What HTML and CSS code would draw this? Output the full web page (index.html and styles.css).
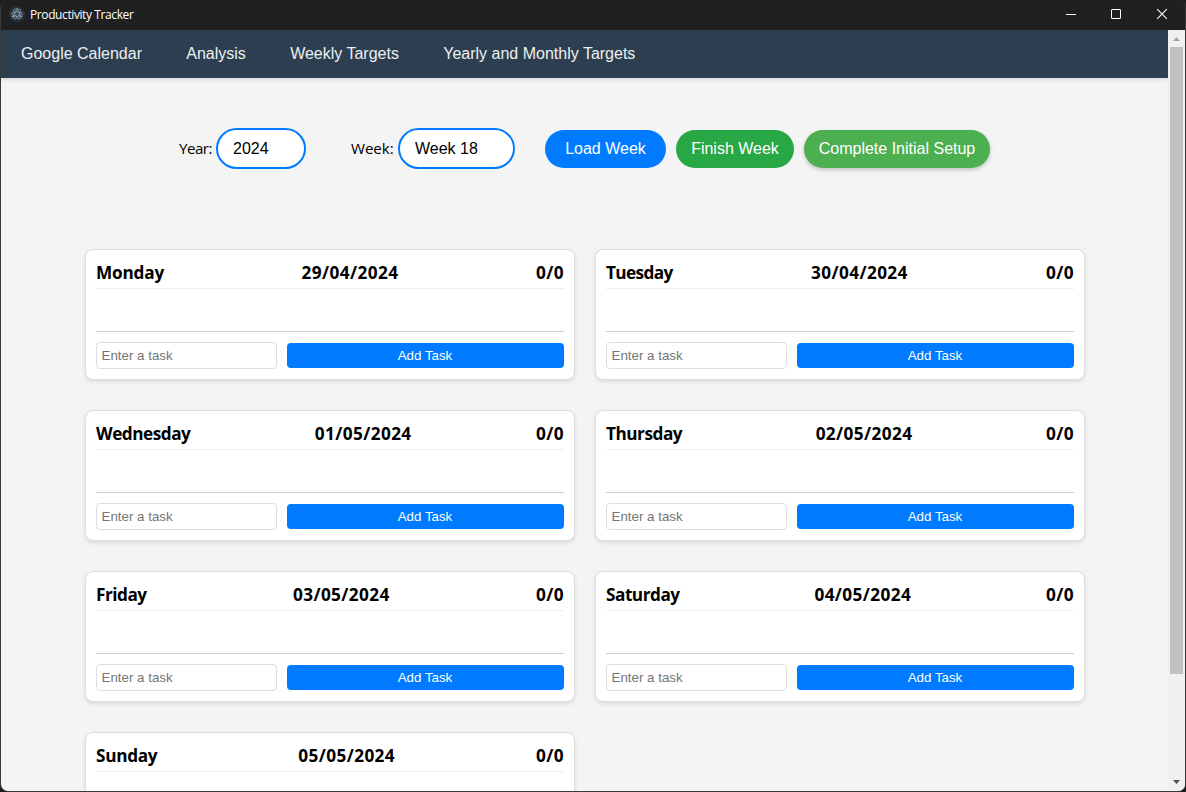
FILE: index.html
```html
<!DOCTYPE html>
<html lang="en">
<head>
<meta charset="utf-8">
<title>Productivity Tracker</title>
<link rel="stylesheet" href="styles.css">
</head>
<body>
<div class="window">
  <header class="titlebar">
    <svg class="app-icon" width="16" height="16" viewBox="0 0 16 16" fill="none" stroke="#8fb3bf" stroke-width="0.75">
      <circle cx="8" cy="8" r="8" fill="#2b2e3b" stroke="none"/>
      <ellipse cx="8" cy="8" rx="5.4" ry="2.2"/>
      <ellipse cx="8" cy="8" rx="5.4" ry="2.2" transform="rotate(60 8 8)"/>
      <ellipse cx="8" cy="8" rx="5.4" ry="2.2" transform="rotate(120 8 8)"/>
      <g fill="#8fb3bf" stroke="none"><circle cx="8" cy="8" r=".6"/><circle cx="3.6" cy="10.6" r=".8"/><circle cx="12.4" cy="10.6" r=".8"/><circle cx="8" cy="2.8" r=".8"/></g>
    </svg>
    <span class="app-title">Productivity Tracker</span>
    <div class="controls">
      <svg width="46" height="30" viewBox="0 0 46 30"><path d="M18 14.5h10" stroke="#fff"/></svg>
      <svg width="46" height="30" viewBox="0 0 46 30"><rect x="17.5" y="9.5" width="9" height="9" rx=".5" fill="none" stroke="#fff"/></svg>
      <svg width="46" height="30" viewBox="0 0 46 30"><path d="M17.2 9.2l9.6 9.6M26.8 9.2l-9.6 9.6" stroke="#fff" stroke-width="1.1"/></svg>
    </div>
  </header>
  <div class="viewport">
    <div class="page">
      <nav class="navbar">
        <a>Google Calendar</a><a>Analysis</a><a>Weekly Targets</a><a>Yearly and Monthly Targets</a>
      </nav>
      <div class="toolbar">
        <label class="year-label">Year:</label><div class="select year">2024</div>
        <label class="week-label">Week:</label><div class="select week">Week 18</div>
        <button class="pill load">Load Week</button>
        <button class="pill finish">Finish Week</button>
        <button class="pill setup">Complete Initial Setup</button>
      </div>
      <main class="days">
        <section class="day"><h3><span class="name mon">Monday</span><span class="date">29/04/2024</span><span class="score">0/0</span></h3><div class="tasks"></div><div class="entry"><input placeholder="Enter a task"><button>Add Task</button></div></section>
        <section class="day"><h3><span class="name tue">Tuesday</span><span class="date">30/04/2024</span><span class="score">0/0</span></h3><div class="tasks"></div><div class="entry"><input placeholder="Enter a task"><button>Add Task</button></div></section>
        <section class="day"><h3><span class="name">Wednesday</span><span class="date">01/05/2024</span><span class="score">0/0</span></h3><div class="tasks"></div><div class="entry"><input placeholder="Enter a task"><button>Add Task</button></div></section>
        <section class="day"><h3><span class="name">Thursday</span><span class="date">02/05/2024</span><span class="score">0/0</span></h3><div class="tasks"></div><div class="entry"><input placeholder="Enter a task"><button>Add Task</button></div></section>
        <section class="day"><h3><span class="name">Friday</span><span class="date">03/05/2024</span><span class="score">0/0</span></h3><div class="tasks"></div><div class="entry"><input placeholder="Enter a task"><button>Add Task</button></div></section>
        <section class="day"><h3><span class="name">Saturday</span><span class="date">04/05/2024</span><span class="score">0/0</span></h3><div class="tasks"></div><div class="entry"><input placeholder="Enter a task"><button>Add Task</button></div></section>
        <section class="day"><h3><span class="name sun">Sunday</span><span class="date">05/05/2024</span><span class="score">0/0</span></h3><div class="tasks"></div></section>
      </main>
    </div>
    <div class="scrollbar">
      <svg width="17" height="17" viewBox="0 0 17 17"><path d="M5 11l3.5-4 3.5 4z" fill="#a3a3a3"/></svg>
      <div class="thumb"></div>
      <svg width="17" height="17" viewBox="0 0 17 17"><path d="M5 6h7l-3.5 4z" fill="#505050"/></svg>
    </div>
  </div>
</div>
</body>
</html>
```
FILE: styles.css
```css
* { box-sizing: border-box; }
body { margin: 0; background: #1b1b1b; overflow: hidden; }
.window {
  width: 1186px; height: 792px;
  border: solid #38393b; border-width: 0 1px 1px;
  border-radius: 8px; overflow: hidden;
  display: flex; flex-direction: column;
  background: #202020;
}
.titlebar { height: 30px; flex: none; display: flex; align-items: center; padding-left: 8px; background: #202020; color: #fff; }
.app-icon { margin-top: -2px; }
.app-title { margin-left: 5px; font: 12px/16px "Open Sans", "Noto Sans", sans-serif; letter-spacing: -0.4px; white-space: nowrap; }
.controls { margin: 0 -1px 0 auto; display: flex; }
.viewport { flex: 1; min-height: 0; display: flex; background: #f4f4f4; }
.page { width: 1167px; flex: none; overflow: hidden; }
.navbar {
  height: 48px; padding-left: 20px; display: flex; align-items: center; gap: 44.3px;
  background: #2c3e50; box-shadow: 0 2px 4px rgba(0,0,0,.1);
  color: #ecf0f1; font: 16px/18px "Liberation Sans", Arial, sans-serif;
}
.navbar a { white-space: nowrap; margin-top: -1px; }
.toolbar { display: flex; align-items: center; height: 41px; margin: 50px 0 80px 178px; }
.toolbar label { font: 15.2px/20px "Open Sans", "Noto Sans", sans-serif; white-space: nowrap; flex: none; margin-top: -1px; }
.toolbar .year-label { width: 37px; letter-spacing: -0.55px; }
.toolbar .week-label { width: 47px; margin-left: 45px; letter-spacing: -0.1px; }
.select {
  height: 41px; border: 2px solid #007bff; border-radius: 21px; background: #fff;
  padding: 0 15px; font: 16px/37px "Liberation Sans", Arial, sans-serif; white-space: nowrap;
}
.year { width: 90px; }
.week { width: 117px; }
.pill {
  height: 38px; border: 0; border-radius: 19px; color: #fff; padding: 0; margin: 1px 10px 0 0;
  font: 16px/38px "Liberation Sans", Arial, sans-serif; white-space: nowrap; flex: none;
}
.load { width: 121px; margin-left: 30px; background: #007bff; }
.finish { width: 118px; background: #28a745; }
.setup { width: 186px; background: #4caf50; box-shadow: 0 2px 4px rgba(0,0,0,.2); }
.days { display: grid; grid-template-columns: 490px 490px; gap: 30px 20px; margin-left: 84px; }
.day {
  height: 131px; border: 1px solid #ddd; border-radius: 8px; padding: 10px; background: #fff;
  box-shadow: 0 2px 4px rgba(0,0,0,.1);
}
.day h3 {
  margin: 0; height: 29px; border-bottom: 1px solid #eee;
  display: flex; justify-content: space-between;
  font: bold 17.2px/25px "Open Sans", "Noto Sans", sans-serif; color: #000;
}
.name { letter-spacing: -0.48px; }
.mon { letter-spacing: -0.2px; }
.tue { letter-spacing: -0.6px; }
.sun { letter-spacing: -0.3px; }
.date { letter-spacing: 0.4px; }
.score { letter-spacing: 0.4px; }
.tasks { height: 43px; border-bottom: 1px solid #ccc; }
.entry { display: flex; align-items: center; gap: 10px; margin-top: 10px; }
.entry input {
  width: 181px; height: 27px; padding: 0 4.5px; border: 1px solid #ddd; border-radius: 4px;
  font: 13.333px "Liberation Sans", Arial, sans-serif; background: #fff;
}
.entry input::placeholder { color: #757575; }
.entry button {
  flex: 1; height: 25px; padding: 0 1px 0 0; border: 0; border-radius: 4px; background: #007bff; color: #fff;
  font: 13.333px "Liberation Sans", Arial, sans-serif;
}
.scrollbar { width: 17px; flex: none; display: flex; flex-direction: column; align-items: center; background: #f0f0f0; }
.scrollbar svg { flex: none; }
.thumb { width: 13px; height: 627px; background: #c1c1c1; margin-bottom: auto; }
```
